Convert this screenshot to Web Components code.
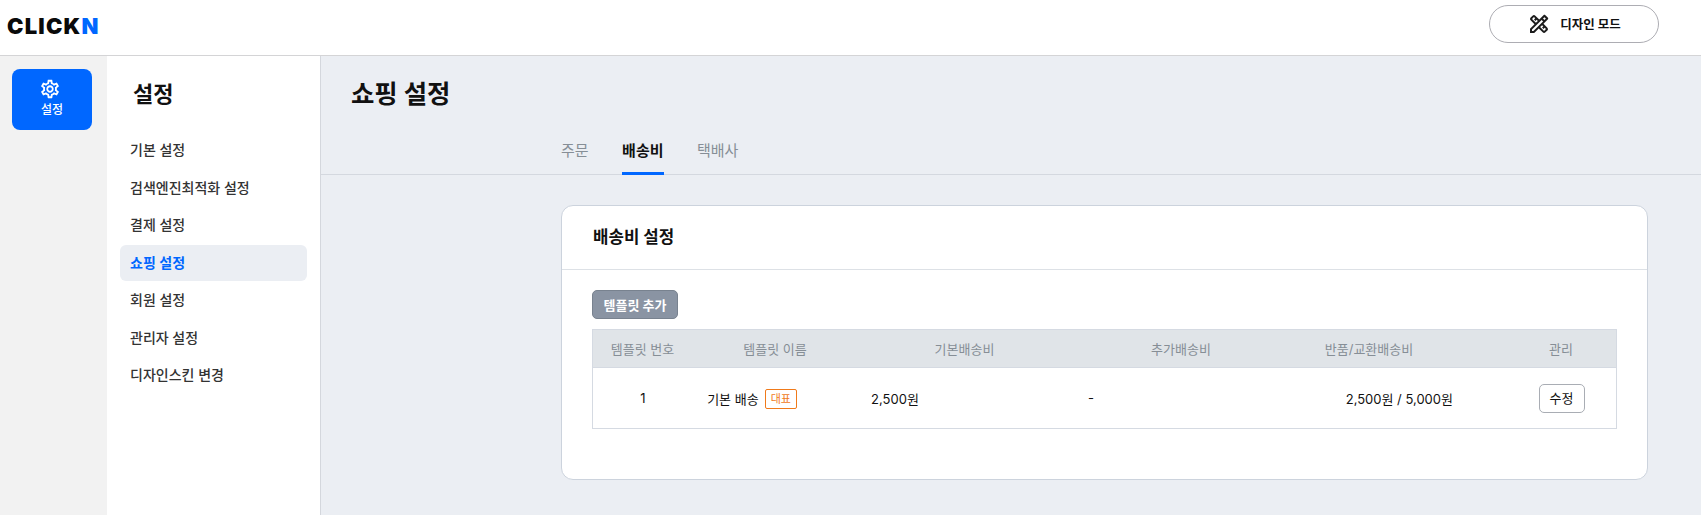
<!DOCTYPE html>
<html lang="ko">
<head>
<meta charset="utf-8">
<title>쇼핑 설정</title>
<style>
    html, body {
        margin: 0;
        height: 100%;
        overflow: hidden;
    }
    body {
        font-family: Inter, "Noto Sans CJK KR", sans-serif;
        color: #111;
    }
</style>
</head>
<body>
<admin-app></admin-app>

<script>
class TopBar extends HTMLElement {
    constructor() {
        super();
        this.attachShadow({ mode: "open" });
        this.shadowRoot.innerHTML = `
            <style>
            :host {
                display: flex;
                justify-content: space-between;
                align-items: center;
                height: 55px;
                background: #fff;
                border-bottom: 1px solid #d4d4d6;
                padding: 0 42px 0 7px;
            }
            .logo {
                margin-top: -4px;
                font-size: 22px;
                font-weight: 900;
                letter-spacing: 1.2px;
                color: #0a0a0a;
            }
            .logo span { color: #0067ff; }
            .mode {
                display: flex;
                align-items: center;
                justify-content: center;
                gap: 9px;
                box-sizing: border-box;
                width: 170px;
                height: 38px;
                margin-top: -8px;
                border: 1px solid #adadb3;
                border-radius: 19px;
                font-size: 12.5px;
                font-weight: 600;
                color: #111;
            }
            svg { display: block; }
            </style>
            <div class="logo">CLICK<span>N</span></div>
            <div class="mode">
                <svg width="24" height="24" viewBox="0 0 24 24" fill="#1c1c1c">
                    <path d="m20.97 7.27c.39-.39.39-1.02 0-1.41l-2.83-2.83c-.39-.39-1.02-.39-1.41 0l-4.49 4.49-3.89-3.89c-.78-.78-2.05-.78-2.83 0l-1.9 1.9c-.78.78-.78 2.05 0 2.83l3.89 3.89L3 16.76V21h4.24l4.52-4.52 3.89 3.89c.95.95 2.23.6 2.83 0l1.9-1.9c.78-.78.78-2.05 0-2.83l-3.89-3.89 4.48-4.48zM5.04 6.94l1.89-1.9 1.27 1.27-1.18 1.19 1.41 1.41L9.63 7.73l1.2 1.2-1.9 1.9-3.89-3.89zm11.23 7.41-1.19 1.19 1.41 1.41 1.19-1.19 1.27 1.27-1.9 1.9-3.89-3.89 1.9-1.9 1.21 1.21zM6.41 19H5v-1.41l9.61-9.61 1.3 1.3.11.11L6.41 19zm9.61-12.44 1.41-1.41 1.41 1.41-1.41 1.41-1.41-1.41z"/>
                </svg>
                디자인 모드
            </div>
        `;
    }
}

class IconRail extends HTMLElement {
    constructor() {
        super();
        this.attachShadow({ mode: "open" });
        this.shadowRoot.innerHTML = `
            <style>
            :host {
                display: block;
                width: 107px;
                flex: none;
                box-sizing: border-box;
                padding: 13px 15px 0 12px;
                background: #f2f2f2;
            }
            .item {
                display: flex;
                flex-direction: column;
                align-items: center;
                gap: 1px;
                box-sizing: border-box;
                height: 61px;
                padding-top: 9px;
                border-radius: 8px;
                background: #0067ff;
                color: #fff;
                font-size: 12px;
                font-weight: 500;
                line-height: 18px;
            }
            svg { display: block; margin-left: -4px; }
            </style>
            <div class="item">
                <svg width="22" height="22" viewBox="0 0 24 24" fill="#fff">
                    <path d="M19.43 12.98c.04-.32.07-.64.07-.98 0-.34-.03-.66-.07-.98l2.11-1.65c.19-.15.24-.42.12-.64l-2-3.46c-.09-.16-.26-.25-.44-.25-.06 0-.12.01-.17.03l-2.49 1c-.52-.4-1.08-.73-1.69-.98l-.38-2.65C14.46 2.18 14.25 2 14 2h-4c-.25 0-.46.18-.49.42l-.38 2.65c-.61.25-1.17.59-1.69.98l-2.49-1c-.06-.02-.12-.03-.18-.03-.17 0-.34.09-.43.25l-2 3.46c-.13.22-.07.49.12.64l2.11 1.65c-.04.32-.07.65-.07.98 0 .33.03.66.07.98l-2.11 1.65c-.19.15-.24.42-.12.64l2 3.46c.09.16.26.25.44.25.06 0 .12-.01.17-.03l2.49-1c.52.4 1.08.73 1.69.98l.38 2.65c.03.24.24.42.49.42h4c.25 0 .46-.18.49-.42l.38-2.65c.61-.25 1.17-.59 1.69-.98l2.49 1c.06.02.12.03.18.03.17 0 .34-.09.43-.25l2-3.46c.12-.22.07-.49-.12-.64l-2.11-1.65zm-1.98-1.71c.04.31.05.52.05.73 0 .21-.02.43-.05.73l-.14 1.13.89.7 1.08.84-.7 1.21-1.27-.51-1.04-.42-.9.68c-.43.32-.84.56-1.25.73l-1.06.43-.16 1.13-.2 1.35h-1.4l-.19-1.35-.16-1.13-1.06-.43c-.43-.18-.83-.41-1.23-.71l-.91-.7-1.06.43-1.27.51-.7-1.21 1.08-.84.89-.7-.14-1.13c-.03-.31-.05-.54-.05-.74s.02-.43.05-.73l.14-1.13-.89-.7-1.08-.84.7-1.21 1.27.51 1.04.42.9-.68c.43-.32.84-.56 1.25-.73l1.06-.43.16-1.13.2-1.35h1.39l.19 1.35.16 1.13 1.06.43c.43.18.83.41 1.23.71l.91.7 1.06-.43 1.27-.51.7 1.21-1.07.85-.89.7.14 1.13zM12 8c-2.21 0-4 1.79-4 4s1.79 4 4 4 4-1.79 4-4-1.79-4-4-4zm0 6c-1.1 0-2-.9-2-2s.9-2 2-2 2 .9 2 2-.9 2-2 2z"/>
                </svg>
                설정
            </div>
        `;
    }
}

class SideMenu extends HTMLElement {
    constructor() {
        super();
        this.attachShadow({ mode: "open" });
        const items = ['기본 설정', '검색엔진최적화 설정', '결제 설정', '쇼핑 설정', '회원 설정', '관리자 설정', '디자인스킨 변경'];
        this.shadowRoot.innerHTML = `
            <style>
            :host {
                display: block;
                width: 214px;
                flex: none;
                box-sizing: border-box;
                padding: 0 13px 0 13px;
                background: #fff;
                border-right: 1px solid #d4d7dd;
            }
            h2 {
                margin: 0;
                padding: 21px 0 0 13px;
                height: 76px;
                box-sizing: border-box;
                font-size: 22px;
                font-weight: 700;
                line-height: 34px;
            }
            ul { list-style: none; margin: 0; padding: 0; display: flex; flex-direction: column; gap: 1.5px; }
            li {
                height: 36px;
                line-height: 36px;
                padding-left: 10px;
                border-radius: 6px;
                font-size: 14px;
                font-weight: 500;
                color: #333;
            }
            li.on { background: #ebeef3; color: #0067ff; font-weight: 600; }
            </style>
            <h2>설정</h2>
            <ul>${items.map(item => `<li class="${item === '쇼핑 설정' ? 'on' : ''}">${item}</li>`).join('')}</ul>
        `;
    }
}

class TabBar extends HTMLElement {
    constructor() {
        super();
        this.attachShadow({ mode: "open" });
        this.shadowRoot.innerHTML = `
            <style>
            :host {
                display: flex;
                gap: 33.5px;
                height: 48px;
                box-sizing: border-box;
                padding-left: 240px;
                border-bottom: 1px solid #d4d8df;
            }
            div {
                box-sizing: border-box;
                height: 48px;
                line-height: 48px;
                font-size: 15px;
                font-weight: 400;
                color: #868e96;
            }
            .on {
                color: #111;
                font-weight: 700;
                border-bottom: 3px solid #0067ff;
            }
            </style>
            <div>주문</div>
            <div class="on">배송비</div>
            <div>택배사</div>
        `;
    }
}

class FeeTable extends HTMLElement {
    constructor() {
        super();
        this.attachShadow({ mode: "open" });
        this.shadowRoot.innerHTML = `
            <style>
            :host {
                display: block;
                border: 1px solid #d5dae2;
                font-size: 13px;
                font-weight: 400;
            }
            .head, .row { display: grid; align-items: center; text-align: center; }
            .head {
                grid-template-columns: 99px 166px 213px 220px 156px 1fr;
                height: 37px;
                background: #e0e4e8;
                border-bottom: 1px solid #d5dae2;
                color: #868e96;
            }
            .manage { justify-self: end; width: 110px; }
            .row {
                grid-template-columns: 100px 118px 168px 224px 304px 1fr;
                height: 60px;
                color: #111;
            }
            .amount { text-align: right; padding-right: 54px; }
            .name { display: flex; justify-content: center; align-items: center; gap: 6px; }
            .badge {
                box-sizing: border-box;
                height: 20px;
                margin-top: 1px;
                padding: 0 5px;
                border: 1px solid #f07a1a;
                border-radius: 2px;
                color: #f07a1a;
                font-size: 11px;
                line-height: 18px;
            }
            .edit {
                justify-self: center;
                box-sizing: border-box;
                width: 46px;
                height: 29px;
                line-height: 27px;
                border: 1px solid #a9adb4;
                border-radius: 5px;
            }
            </style>
            <div class="head">
                <div>템플릿 번호</div>
                <div>템플릿 이름</div>
                <div>기본배송비</div>
                <div>추가배송비</div>
                <div>반품/교환배송비</div>
                <div class="manage">관리</div>
            </div>
            <div class="row">
                <div>1</div>
                <div class="name">기본 배송 <span class="badge">대표</span></div>
                <div>2,500원</div>
                <div>-</div>
                <div class="amount">2,500원 / 5,000원</div>
                <div class="edit">수정</div>
            </div>
        `;
    }
}

class SettingCard extends HTMLElement {
    constructor() {
        super();
        this.attachShadow({ mode: "open" });
        this.shadowRoot.innerHTML = `
            <style>
            :host {
                display: block;
                width: 1087px;
                height: 275px;
                box-sizing: border-box;
                background: #fff;
                border: 1px solid #ccd3dd;
                border-radius: 12px;
            }
            h3 {
                margin: 0;
                height: 64px;
                box-sizing: border-box;
                padding-left: 31px;
                font-size: 16.8px;
                font-weight: 700;
                line-height: 63px;
                border-bottom: 1px solid #dde1e6;
            }
            .body { padding: 20px 30px 0; }
            button {
                display: block;
                box-sizing: border-box;
                width: 86px;
                height: 29px;
                padding: 0;
                margin-bottom: 10px;
                border: 1px solid #78828f;
                border-radius: 5px;
                background: #8a94a3;
                color: #fff;
                font: 700 13px Inter, "Noto Sans CJK KR", sans-serif;
            }
            </style>
            <h3>배송비 설정</h3>
            <div class="body">
                <button>템플릿 추가</button>
                <fee-table></fee-table>
            </div>
        `;
    }
}

class AdminApp extends HTMLElement {
    constructor() {
        super();
        this.attachShadow({ mode: "open" });
        this.shadowRoot.innerHTML = `
            <style>
            :host { display: flex; flex-direction: column; height: 515px; overflow: hidden; }
            .columns { flex: 1; display: flex; min-height: 0; }
            main { flex: 1; min-width: 0; background: #ebeef3; }
            h1 {
                margin: 0;
                height: 71px;
                padding: 0 0 0 30px;
                box-sizing: border-box;
                font-size: 25.4px;
                font-weight: 700;
                line-height: 76px;
            }
            setting-card { margin: 30px 0 0 240px; }
            </style>
            <top-bar></top-bar>
            <div class="columns">
                <icon-rail></icon-rail>
                <side-menu></side-menu>
                <main>
                    <h1>쇼핑 설정</h1>
                    <tab-bar></tab-bar>
                    <setting-card></setting-card>
                </main>
            </div>
        `;
    }
}

customElements.define('top-bar', TopBar);
customElements.define('icon-rail', IconRail);
customElements.define('side-menu', SideMenu);
customElements.define('tab-bar', TabBar);
customElements.define('fee-table', FeeTable);
customElements.define('setting-card', SettingCard);
customElements.define('admin-app', AdminApp);
</script>
</body>
</html>
